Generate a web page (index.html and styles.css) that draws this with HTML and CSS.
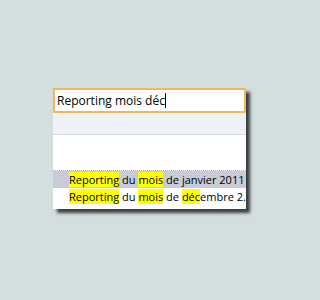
FILE: index.html
```html
<!DOCTYPE html>
<html lang="fr">
<head>
<meta charset="utf-8">
<link rel="stylesheet" href="styles.css">
</head>
<body>
<div class="stage">
  <div class="panel">
    <div class="search"><span class="query">Reporting mois déc</span><span class="caret"></span></div>
    <div class="band"></div>
    <div class="spacer"></div>
    <div class="list">
      <div class="row selected"><mark>Reporting</mark> du <mark>mois</mark> de janvier 2011</div>
      <div class="row"><mark>Reporting</mark> du <mark>mois</mark> de <mark>déc</mark>embre 2.</div>
    </div>
  </div>
</div>
</body>
</html>
```
FILE: styles.css
```css
html, body {
  margin: 0;
  padding: 0;
  background: #d4dedf;
  width: 300px;
  height: 300px;
  overflow: hidden;
}
.stage {
  padding: 88px 0 0 53px;
}
.panel {
  width: 193px;
  background: #ffffff;
  box-shadow: 4px 4px 3px rgba(30, 34, 36, 0.85);
  font-family: "Open Sans", "Noto Sans", sans-serif;
  color: #000;
}
.search {
  height: 21px;
  border: 2px solid #efb860;
  display: flex;
  align-items: center;
  padding-left: 2px;
  font-size: 12px;
}
.caret {
  width: 1px;
  height: 15px;
  background: #000;
}
.band {
  height: 21px;
  background: #eef1f5;
  border-bottom: 1px solid #d8dce2;
}
.spacer {
  height: 35px;
}
.list {
  border-top: 1px dotted #a9acb3;
  padding-bottom: 4px;
}
.row {
  height: 17px;
  line-height: 17px;
  padding-left: 16px;
  font-size: 11px;
  white-space: nowrap;
  overflow: hidden;
}
.row.selected {
  background: #c8ccd8;
}
mark {
  background: #ffff00;
  color: #000;
}
```
